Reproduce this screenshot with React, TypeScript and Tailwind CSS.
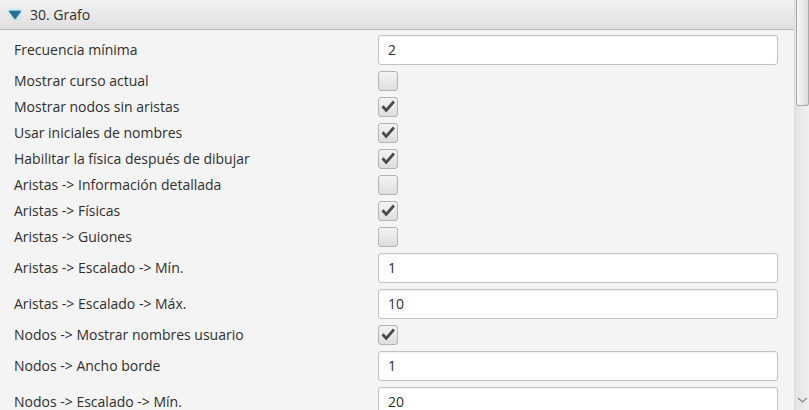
import type { ReactNode } from "react";

type Row =
  | { label: string; kind: "text"; value: string }
  | { label: string; kind: "check"; checked: boolean };

const rows: Row[] = [
  { label: "Frecuencia mínima", kind: "text", value: "2" },
  { label: "Mostrar curso actual", kind: "check", checked: false },
  { label: "Mostrar nodos sin aristas", kind: "check", checked: true },
  { label: "Usar iniciales de nombres", kind: "check", checked: true },
  { label: "Habilitar la física después de dibujar", kind: "check", checked: true },
  { label: "Aristas -> Información detallada", kind: "check", checked: false },
  { label: "Aristas -> Físicas", kind: "check", checked: true },
  { label: "Aristas -> Guiones", kind: "check", checked: false },
  { label: "Aristas -> Escalado -> Mín.", kind: "text", value: "1" },
  { label: "Aristas -> Escalado -> Máx.", kind: "text", value: "10" },
  { label: "Nodos -> Mostrar nombres usuario", kind: "check", checked: true },
  { label: "Nodos -> Ancho borde", kind: "text", value: "1" },
  { label: "Nodos -> Escalado -> Mín.", kind: "text", value: "20" },
];

function CheckBox({ checked }: { checked: boolean }) {
  return (
    <div className="flex h-5 w-5 items-center justify-center rounded-[3px] border border-[#b3b3b3] bg-gradient-to-b from-[#f3f3f3] to-[#dedede]">
      {checked ? (
        <svg width="18" height="18" viewBox="0 0 18 18">
          <path d="M2.5 9.2 L4.6 7.3 L7.2 10.2 L13.9 2.6 L16 4.5 L7.2 14.6 Z" fill="#4a4a4a" />
        </svg>
      ) : null}
    </div>
  );
}

function TextBox({ value }: { value: string }) {
  return (
    <div className="flex h-[30px] w-[400px] items-center rounded-[3px] border border-[#c2c2c2] bg-white pl-[9px] text-[14px] leading-[18px] text-[#2f2f2f] shadow-[inset_0_1px_2px_rgba(0,0,0,0.06)]">
      {value}
    </div>
  );
}

function Field({ label, children }: { label: string; children: ReactNode }) {
  return (
    <>
      <div className="flex items-center text-[14px] leading-[18px] text-[#2f2f2f]">{label}</div>
      <div className="flex items-center">{children}</div>
    </>
  );
}

function ScrollBar() {
  return (
    <div className="flex h-full w-[15px] flex-col border-l border-[#dcdcdc] bg-gradient-to-r from-[#e4e4e4] to-[#f0f0f0]">
      <div className="ml-[1px] h-[106px] rounded-b-[3px] border border-t-0 border-[#a9a9a9] bg-gradient-to-r from-[#f6f6f6] to-[#dcdcdc]" />
      <div className="flex-1" />
      <div className="flex h-[16px] items-center justify-center pb-[4px]">
        <svg width="11" height="6" viewBox="0 0 11 6">
          <path d="M1 1 L5.5 5 L10 1" stroke="#8a8a8a" strokeWidth="1.3" fill="none" />
        </svg>
      </div>
    </div>
  );
}

export default function App() {
  return (
    <div
      className="flex h-[410px] w-[809px] overflow-hidden bg-[#f4f4f4]"
      style={{ fontFamily: '"Open Sans", "Noto Sans", sans-serif' }}
    >
      <div className="flex min-w-0 flex-1 flex-col">
        <div className="flex h-[30px] shrink-0 items-center border-b border-[#b8b8b8] bg-gradient-to-b from-[#f3f3f3] to-[#dfdfdf] pl-[8px]">
          <svg width="14" height="10" viewBox="0 0 14 10" className="drop-shadow-[0_0_1.5px_rgba(70,190,245,0.95)]">
            <path d="M0.5 0.8 L13.5 0.8 L7 9.4 Z" fill="#236f96" />
          </svg>
          <span className="ml-[8px] text-[14px] text-[#2f2f2f]">30. Grafo</span>
        </div>
        <div className="grid grid-cols-[364px_400px] gap-y-[6px] pl-[14px] pt-[5px]">
          {rows.map((row) => (
            <Field key={row.label} label={row.label}>
              {row.kind === "text" ? <TextBox value={row.value} /> : <CheckBox checked={row.checked} />}
            </Field>
          ))}
        </div>
      </div>
      <ScrollBar />
    </div>
  );
}
